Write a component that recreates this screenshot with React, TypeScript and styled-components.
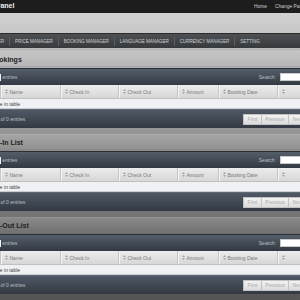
import React from 'react';
import styled, { createGlobalStyle } from 'styled-components';

const GlobalStyle = createGlobalStyle`
    html, body {
        margin: 0;
        padding: 0;
        height: 100%;
        overflow: hidden;
    }
    body {
        background: linear-gradient(#cbcbcb 0px, #b6b6b6 60px, #8c8c8c 150px, #6e6e6e 230px, #555555 300px);
        font-family: 'Liberation Sans', Arial, sans-serif;
    }
`;

const columns = ['Name', 'Check In', 'Check Out', 'Amount', 'Booking Date', ''];
const menu = ['ROOM MANAGER', 'PRICE MANAGER', 'BOOKING MANAGER', 'LANGUAGE MANAGER', 'CURRENCY MANAGER', 'SETTING'];
const sections = ['All Bookings', 'Check-In List', 'Check-Out List'];

function SortIcon() {
    return (
        <svg width="3" height="5" viewBox="0 0 3 5">
            <path d="M1.5 0 L3 2 L0 2 Z M1.5 5 L3 3 L0 3 Z" fill="#a4a4a4" />
        </svg>
    );
}

function BookingTable({ title }: { title: string }) {
    return (
        <Section>
            <SectionHead>{title}</SectionHead>
            <Toolbar>
                <Length>
                    Show <SizeSelect>10 ▾</SizeSelect> entries
                </Length>
                <Filter>
                    Search: <SearchBox />
                </Filter>
            </Toolbar>
            <HeadRow>
                <HeadCell>
                    <SortIcon /> ID
                </HeadCell>
                {columns.map((c, i) => (
                    <HeadCell key={i}>
                        <SortIcon /> {c}
                    </HeadCell>
                ))}
            </HeadRow>
            <EmptyRow>No data available in table</EmptyRow>
            <Footer>
                <Info>Showing 0 to 0 of 0 entries</Info>
                <Paging>
                    <PageButton>First</PageButton>
                    <PageButton>Previous</PageButton>
                    <PageButton>Next</PageButton>
                    <PageButton>Last</PageButton>
                </Paging>
            </Footer>
        </Section>
    );
}

export default function App() {
    return (
        <>
            <GlobalStyle />
            <Page>
                <TopBar>
                    <Brand>Admin Panel</Brand>
                    <TopLinks>
                        <TopLink>Home</TopLink>
                        <TopLink>Change Password</TopLink>
                    </TopLinks>
                </TopBar>
                <Band />
                <Nav>
                    {menu.map((m, i) => (
                        <NavItem key={m} first={i === 0}>
                            {m}
                        </NavItem>
                    ))}
                </Nav>
                {sections.map((s) => (
                    <BookingTable key={s} title={s} />
                ))}
            </Page>
        </>
    );
}

const Page = styled.div`
    margin-left: -40px;
    width: 373px;
`;

const TopBar = styled.div`
    height: 13px;
    background: #1d1d1d;
    display: flex;
    align-items: center;
    justify-content: space-between;
    padding: 0 18px 0 12px;
`;

const Brand = styled.div`
    color: #eeeeee;
    font-weight: bold;
    font-size: 7px;
    margin-top: -2px;
`;

const TopLinks = styled.div`
    display: flex;
    gap: 8px;
`;

const TopLink = styled.span`
    color: #cfcfcf;
    font-size: 4.9px;
`;

const Band = styled.div`
    height: 20px;
    background: linear-gradient(#d2d2d2, #c6c6c6);
`;

const Nav = styled.div`
    height: 15px;
    display: flex;
    align-items: center;
    padding-left: 1px;
    background: linear-gradient(#4c5054, #373a3d);
    border-top: 1px solid #2c2c2c;
    box-sizing: border-box;
`;

const NavItem = styled.div<{ first?: boolean }>`
    color: #cdd0d3;
    font-size: 4.5px;
    padding: 0 5px;
    line-height: 9px;
    border-left: ${(p) => (p.first ? 'none' : '1px solid #5a5e62')};
`;

const Section = styled.div`
    height: 80px;
`;

const SectionHead = styled.div`
    height: 16px;
    margin: 3px 0 1px;
    padding-left: 19px;
    display: flex;
    align-items: center;
    font-size: 7px;
    font-weight: bold;
    color: #222222;
    background: linear-gradient(rgba(255, 255, 255, 0.16), rgba(255, 255, 255, 0.04));
    border-top: 1px solid rgba(255, 255, 255, 0.18);
    border-bottom: 1px solid rgba(0, 0, 0, 0.12);
    box-sizing: border-box;
`;

const Toolbar = styled.div`
    height: 17px;
    display: flex;
    align-items: center;
    justify-content: space-between;
    padding: 0 8px 0 11px;
    background: linear-gradient(#545e6a, #323942);
    border-top: 1px solid #2a2f35;
    box-sizing: border-box;
    color: #bcc0c5;
    font-size: 5px;
`;

const Length = styled.div`
    display: flex;
    align-items: center;
    gap: 1.4px;
`;

const SizeSelect = styled.span`
    width: 16px;
    height: 7px;
    background: #f4f4f4;
    color: #333;
    font-size: 4px;
    display: inline-flex;
    align-items: center;
    padding-left: 2px;
    box-sizing: border-box;
`;

const Filter = styled.div`
    display: flex;
    align-items: center;
    gap: 4px;
`;

const SearchBox = styled.span`
    width: 45px;
    height: 8px;
    background: #ffffff;
    border: 1px solid #c8c8c8;
    box-sizing: border-box;
`;

const HeadRow = styled.div`
    height: 14px;
    display: grid;
    grid-template-columns: 40px 60px 58px 59px 41px 59px 1fr;
    background: linear-gradient(#ececec, #d7d7d7);
    border-bottom: 1px solid #c0c0c0;
    box-sizing: border-box;
`;

const HeadCell = styled.div`
    display: flex;
    align-items: center;
    gap: 1.5px;
    padding-left: 4px;
    font-size: 5px;
    color: #7a7a7a;
    border-left: 1px solid #c6c6c6;
    box-shadow: inset 1px 0 0 #f4f4f4;
`;

const EmptyRow = styled.div`
    height: 10px;
    display: flex;
    align-items: center;
    padding-left: 4px;
    font-size: 5px;
    color: #444444;
    background: #eff1f4;
    border-bottom: 1px solid #c9ccd0;
    box-sizing: border-box;
`;

const Footer = styled.div`
    height: 19px;
    display: flex;
    align-items: center;
    justify-content: space-between;
    padding: 0 8px 0 6px;
    background: linear-gradient(#4f5965, #323942);
    border-top: 1px solid #5f6873;
    box-sizing: border-box;
    font-size: 5px;
    color: #bcc0c5;
`;

const Info = styled.div``;

const Paging = styled.div`
    display: flex;
`;

const PageButton = styled.span`
    height: 9px;
    padding: 0 3.5px;
    display: flex;
    align-items: center;
    font-size: 5px;
    color: #ababab;
    background: linear-gradient(#f2f2f2, #dcdcdc);
    border: 1px solid #c2c2c2;
    margin-left: -1px;
`;
